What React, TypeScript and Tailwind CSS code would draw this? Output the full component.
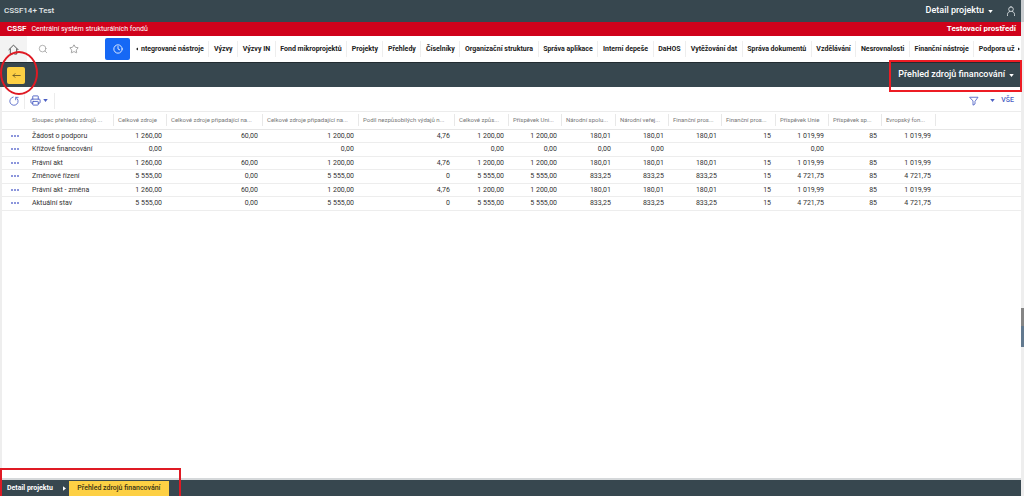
import React from "react";
import { clsx } from "clsx";
import { Clock, Printer, Search, Star } from "lucide-react";

interface Column {
  label: string;
  width: string;
}

interface Row {
  name: string;
  values: string[];
}

const menu = [
  "Výzvy",
  "Výzvy IN",
  "Fond mikroprojektů",
  "Projekty",
  "Přehledy",
  "Číselníky",
  "Organizační struktura",
  "Správa aplikace",
  "Interní depeše",
  "DaHOS",
  "Vytěžování dat",
  "Správa dokumentů",
  "Vzdělávání",
  "Nesrovnalosti",
  "Finanční nástroje",
];

const columns: Column[] = [
  { label: "Celkové zdroje", width: "w-[53px]" },
  { label: "Celkové zdroje připadající na...", width: "w-[96px]" },
  { label: "Celkové zdroje připadající na...", width: "w-[96px]" },
  { label: "Podíl nezpůsobilých výdajů n...", width: "w-[96px]" },
  { label: "Celkové způs...", width: "w-[54px]" },
  { label: "Příspěvek Uni...", width: "w-[53px]" },
  { label: "Národní spolu...", width: "w-[54px]" },
  { label: "Národní veřej...", width: "w-[53px]" },
  { label: "Finanční pros...", width: "w-[53px]" },
  { label: "Finanční pros...", width: "w-[54px]" },
  { label: "Příspěvek Unie", width: "w-[53px]" },
  { label: "Příspěvek sp...", width: "w-[53px]" },
  { label: "Evropský fon...", width: "w-[54px]" },
];

const base = ["1 260,00", "60,00", "1 200,00", "4,76", "1 200,00", "1 200,00", "180,01", "180,01", "180,01", "15", "1 019,99", "85", "1 019,99"];
const changed = ["5 555,00", "0,00", "5 555,00", "0", "5 555,00", "5 555,00", "833,25", "833,25", "833,25", "15", "4 721,75", "85", "4 721,75"];
const cross = ["0,00", "", "0,00", "", "0,00", "0,00", "0,00", "0,00", "", "", "0,00", "", ""];

const rows: Row[] = [
  { name: "Žádost o podporu", values: base },
  { name: "Křížové financování", values: cross },
  { name: "Právní akt", values: base },
  { name: "Změnové řízení", values: changed },
  { name: "Právní akt - změna", values: base },
  { name: "Aktuální stav", values: changed },
];

const Caret = ({ className = "h-[3px] w-[5px]" }: { className?: string }) => (
  <svg viewBox="0 0 6 4" className={clsx("shrink-0", className)} aria-hidden="true">
    <path d="M0 0h6L3 4z" fill="currentColor" />
  </svg>
);

// thin line icon on a 12x12 grid
const LineIcon = ({ d, size = 10 }: { d: string; size?: number }) => (
  <svg width={size} height={size} viewBox="0 0 12 12" fill="none" stroke="currentColor" aria-hidden="true">
    <path d={d} strokeLinejoin="round" strokeLinecap="round" />
  </svg>
);

function TopBar() {
  return (
    <header>
      <div className="flex h-[22px] items-center justify-between bg-[#37474f] pr-[5px] pl-1 text-[#e3e8ea]">
        <span className="text-[8px] leading-3 font-medium">CSSF14+ Test</span>
        <div className="flex items-center gap-[13px]">
          <button className="flex items-center gap-1 text-[9px] font-medium text-white">
            Detail projektu
            <Caret />
          </button>
          <button aria-label="Uživatel">
            <LineIcon d="M6 1a2.8 2.8 0 1 1 0 5.6A2.8 2.8 0 0 1 6 1zM1.8 11.5V10c0-2 1.4-3 2.6-3.4M10.2 11.5V10c0-2-1.4-3-2.6-3.4" />
          </button>
        </div>
      </div>
      <div className="flex h-[14px] items-center bg-[#d0021b] pr-[5px] pl-[7px] text-[7px] text-white">
        <span className="mr-[5px] text-[8px] font-bold">CSSF</span>
        <span>Centrální systém strukturálních fondů</span>
        <span className="ml-auto text-[8px] leading-3 font-bold">Testovací prostředí</span>
      </div>
    </header>
  );
}

function MainMenu() {
  return (
    <nav className="flex h-[26px] items-center bg-white text-[#212121]">
      <button aria-label="Domů" className="flex h-full w-[27px] items-center justify-center bg-[#f3f3f3] text-[#444]">
        <LineIcon size={11} d="M1 6.2L6 1.2l5 5M2.5 5.5V11h2.2M9.5 5.5V11H7.3" />
      </button>
      <button aria-label="Hledat" className="flex h-full w-8 items-center justify-center text-[#9a9a9a]">
        <Search size={10} strokeWidth={1.8} />
      </button>
      <button aria-label="Oblíbené" className="flex h-full w-[29px] items-center justify-center text-[#777]">
        <Star size={10} strokeWidth={1.6} />
      </button>
      <button
        aria-label="Historie"
        className="ml-[17px] flex h-[22px] w-[25px] items-center justify-center rounded-[2px] bg-[#1668f5] text-white"
      >
        <Clock size={10} strokeWidth={2} />
      </button>
      <button aria-label="Posunout vlevo" className="ml-[5px] flex w-[6px] shrink-0 justify-start">
        <Caret className="h-[2px] w-1 rotate-90" />
      </button>
      <div className="flex h-4 min-w-0 flex-1 items-center justify-between text-[7px] font-bold whitespace-nowrap">
        <a href="#">ntegrované nástroje</a>
        {menu.map((item) => (
          <React.Fragment key={item}>
            <span className="h-4 w-px bg-[#eeeeee]" />
            <a href="#">{item}</a>
          </React.Fragment>
        ))}
        <span className="h-4 w-px bg-[#eeeeee]" />
        <a href="#">Podpora už</a>
      </div>
      <button aria-label="Posunout vpravo" className="flex w-[6px] shrink-0 justify-end">
        <Caret className="h-[2px] w-1 -rotate-90" />
      </button>
    </nav>
  );
}

function TitleBar() {
  return (
    <div className="flex h-[25px] items-center justify-between border-t border-[#222c31] bg-[#37474f] pr-[7px] pl-[7px]">
      <div className="relative">
        <button
          aria-label="Zpět"
          className="flex h-[17px] w-[18px] items-center justify-center rounded-[2px] bg-[#fdd044] text-[#4d4420]"
        >
          <LineIcon size={9} d="M1.5 6h9.5M4 3.5L1.5 6L4 8.5" />
        </button>
        <span className="pointer-events-none absolute -top-4 -left-[7px] h-11 w-[38px] rounded-[50%] border-2 border-[#df1a24]" />
      </div>
      <div className="relative">
        <button className="flex items-center gap-1 text-[9px] font-medium text-white">
          Přehled zdrojů financování
          <Caret />
        </button>
        <span className="pointer-events-none absolute -top-2 -right-2 -bottom-[10px] -left-[9px] border-2 border-[#ed1c24]" />
      </div>
    </div>
  );
}

function Toolbar() {
  return (
    <div className="flex h-[25px] items-center border-b border-[#ececec] pt-[3px] pr-[7px] pl-[7px] text-[#4b5fc4]">
      <button aria-label="Obnovit">
        <LineIcon d="M8.5 1.8A5 5 0 1 1 5 1.2M8 4.6V1.6h3" />
      </button>
      <span className="mx-[5px] h-4 w-px bg-[#ececec]" />
      <button aria-label="Tisk" className="flex items-center gap-[2px]">
        <Printer size={11} strokeWidth={2} />
        <Caret />
      </button>
      <span className="ml-[6px] h-4 w-px bg-[#ececec]" />
      <button aria-label="Filtr" className="ml-auto">
        <LineIcon d="M1.2 1.5h9.6L7.2 6.4v3.2L4.8 11V6.4z" />
      </button>
      <button className="ml-[11px] flex items-center gap-[6px] text-[7px] font-medium">
        <Caret />
        VŠE
      </button>
    </div>
  );
}

function SourcesTable() {
  return (
    <table className="w-full table-fixed border-collapse text-[7px] leading-3 whitespace-nowrap text-[#333]">
      <thead>
        <tr className="h-[17px] border-b border-[#e6e6e6] text-left text-[6px] text-[#777]">
          <th className="w-[26px] p-0" aria-label="Akce" />
          <th className="w-[85px] p-0 pl-1 font-normal">Sloupec přehledu zdrojů ...</th>
          {columns.map((col, i) => (
            <th key={i} className={clsx("p-0 font-normal", col.width)}>
              <div className="border-l border-[#e8e8e8] pl-1">{col.label}</div>
            </th>
          ))}
          <th className="p-0" aria-label="Konec">
            <div className="h-3 border-l border-[#e8e8e8]" />
          </th>
        </tr>
      </thead>
      <tbody>
        {rows.map((row) => (
          <tr key={row.name} className="h-[13px] border-b border-[#ededed] even:h-[14px]">
            <td className="p-0">
              <button aria-label={`Akce: ${row.name}`} className="flex h-3 w-full items-center justify-center gap-px">
                <span className="size-[2px] rounded-full bg-[#6673d0]" />
                <span className="size-[2px] rounded-full bg-[#6673d0]" />
                <span className="size-[2px] rounded-full bg-[#6673d0]" />
              </button>
            </td>
            <td className="p-0 pl-1">{row.name}</td>
            {row.values.map((value, i) => (
              <td key={i} className="p-0 pr-1 text-right">
                {value}
              </td>
            ))}
            <td className="p-0" />
          </tr>
        ))}
      </tbody>
    </table>
  );
}

function Breadcrumbs() {
  return (
    <footer className="relative flex h-4 items-center bg-[#37474f] pt-px text-[7px] font-bold text-white">
      <a href="#" className="pl-[7px]">
        Detail projektu
      </a>
      <Caret className="mr-[2px] ml-[9px] h-[3px] w-[5px] -rotate-90" />
      <a href="#" className="flex h-full w-[100px] items-center justify-center bg-[#fdd044] font-medium text-[#3b3413]">
        Přehled zdrojů financování
      </a>
      <span className="pointer-events-none absolute -top-3 bottom-0 left-0 w-[181px] border-2 border-b-0 border-[#df1a24]" />
    </footer>
  );
}

export default function App() {
  return (
    <div className="flex min-h-screen bg-white font-['Roboto','Liberation_Sans',sans-serif]">
      <div className="flex min-w-0 flex-1 flex-col">
        <TopBar />
        <MainMenu />
        <TitleBar />
        <main className="flex flex-1 flex-col border-b-2 border-l-2 border-b-[#d5d8da] border-l-[#eeeeee]">
          <Toolbar />
          <SourcesTable />
        </main>
        <Breadcrumbs />
      </div>
      <div className="flex w-[3px] flex-col bg-[#eeeeee]">
        <div className="h-[22px] bg-[#c9cdd0]" />
        <div className="mt-[286px] h-[18px] bg-[#858585]" />
        <div className="h-[21px] bg-[#62798f]" />
      </div>
    </div>
  );
}
